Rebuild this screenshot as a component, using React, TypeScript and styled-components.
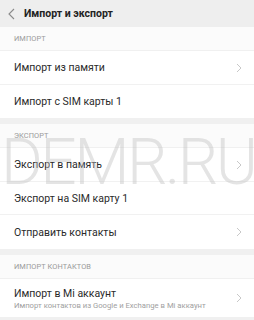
import React from 'react';
import styled, { createGlobalStyle } from 'styled-components';

const GlobalStyle = createGlobalStyle`
  html, body {
    margin: 0;
    padding: 0;
    background: #f0f0f0;
    font-family: Roboto, "Liberation Sans", Arial, sans-serif;
  }
`;

const Screen = styled.div`
  position: relative;
  width: 254px;
  height: 320px;
  overflow: hidden;
  background: #f0f0f0;
`;

const Header = styled.div`
  height: 27px;
  display: flex;
  align-items: center;
  background: #eeeeee;
  padding-left: 8px;
  gap: 9px;
`;

const Title = styled.h1`
  margin: 0;
  font-size: 10.5px;
  font-weight: 700;
  color: #222;
`;

const SectionLabel = styled.div`
  height: 23px;
  display: flex;
  align-items: center;
  padding-left: 14px;
  background: #fbfbfb;
  border-bottom: 1px solid #f0f0f0;
  font-size: 7.4px;
  color: #9a9a9a;
  letter-spacing: 0.1px;
`;

const Group = styled.div<{ $gap?: boolean }>`
  background: #fff;
  margin-bottom: ${p => (p.$gap ? '6px' : '0')};
`;

const Row = styled.div<{ $h: number; $last?: boolean }>`
  height: ${p => p.$h}px;
  display: flex;
  align-items: center;
  justify-content: space-between;
  padding: 0 12px 0 14px;
  box-sizing: border-box;
  border-bottom: ${p => (p.$last ? 'none' : '1px solid #f1f1f1')};
`;

const RowText = styled.div`
  display: flex;
  flex-direction: column;
  gap: 1px;
`;

const Label = styled.span`
  font-size: 10.5px;
  color: #2a2a2a;
`;

const Sub = styled.span`
  font-size: 7.7px;
  color: #a0a0a0;
`;

const Watermark = styled.div`
  position: absolute;
  left: 1px;
  top: 125px;
  font-family: Roboto, "Liberation Sans", sans-serif;
  font-weight: 300;
  font-size: 64px;
  letter-spacing: -2.6px;
  color: rgba(190, 190, 190, 0.42);
  pointer-events: none;
  white-space: nowrap;
`;

const Chevron = () => (
  <svg width="6" height="10" viewBox="0 0 6 10">
    <path d="M1 1 L5 5 L1 9" fill="none" stroke="#c8c8c8" strokeWidth="1" />
  </svg>
);

const Back = () => (
  <svg width="7" height="12" viewBox="0 0 7 12">
    <path d="M6 1 L1 6 L6 11" fill="none" stroke="#8a8a8a" strokeWidth="1.1" />
  </svg>
);

export default function App() {
  return (
    <Screen>
      <GlobalStyle />
      <Header>
        <Back />
        <Title>Импорт и экспорт</Title>
      </Header>

      <Group $gap>
        <SectionLabel>ИМПОРТ</SectionLabel>
        <Row $h={34}>
          <Label>Импорт из памяти</Label>
          <Chevron />
        </Row>
        <Row $h={33} $last>
          <Label>Импорт с SIM карты 1</Label>
        </Row>
      </Group>

      <Group $gap>
        <SectionLabel>ЭКСПОРТ</SectionLabel>
        <Row $h={34}>
          <Label>Экспорт в память</Label>
          <Chevron />
        </Row>
        <Row $h={33}>
          <Label>Экспорт на SIM карту 1</Label>
        </Row>
        <Row $h={34} $last>
          <Label>Отправить контакты</Label>
          <Chevron />
        </Row>
      </Group>

      <Group>
        <SectionLabel>ИМПОРТ КОНТАКТОВ</SectionLabel>
        <Row $h={38} $last>
          <RowText>
            <Label>Импорт в Mi аккаунт</Label>
            <Sub>Импорт контактов из Google и Exchange в Mi аккаунт</Sub>
          </RowText>
          <Chevron />
        </Row>
      </Group>

      <Watermark>DEMR.RU</Watermark>
    </Screen>
  );
}
